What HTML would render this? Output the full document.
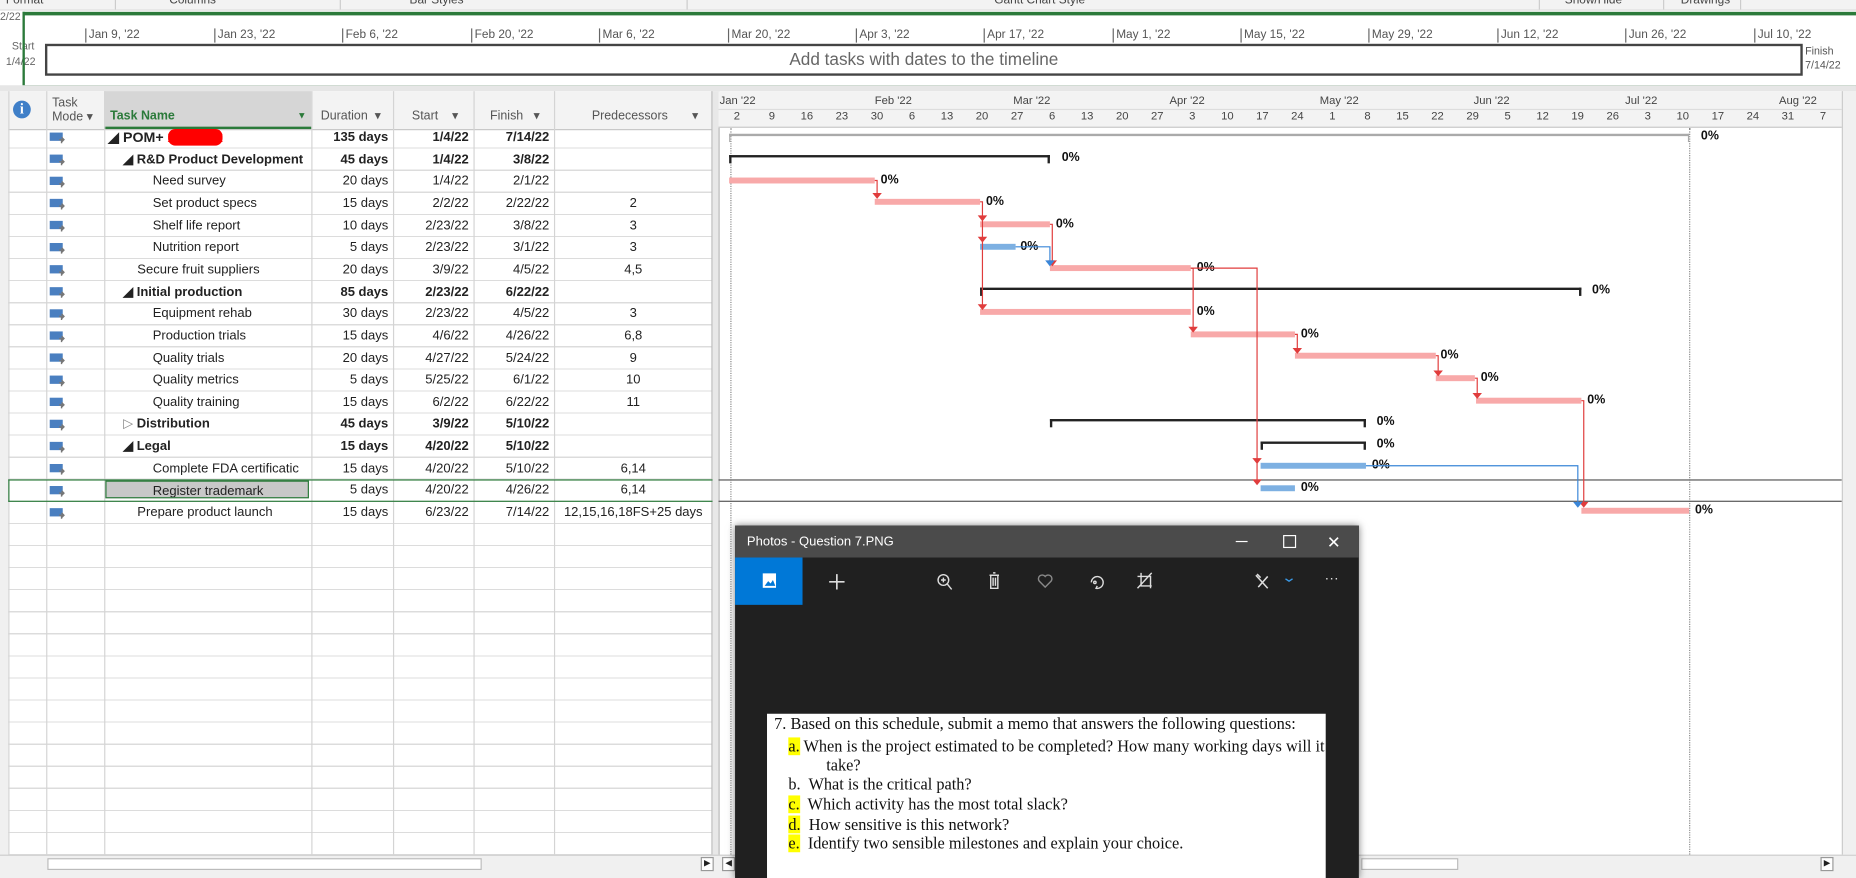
<!DOCTYPE html>
<html><head><meta charset="utf-8">
<style>
html,body{margin:0;padding:0;width:1856px;height:878px;overflow:hidden;background:#fff;}
#root{position:absolute;left:0;top:0;width:1568px;height:742px;transform:scale(1.18367);transform-origin:0 0;font-family:"Liberation Sans",sans-serif;font-size:11px;color:#222;overflow:hidden;background:#fff}
.a{position:absolute}
.rib{top:0;left:0;width:1568px;height:8px;background:#f3f3f3;border-bottom:1px solid #ddd;overflow:hidden}
.rib span{position:absolute;top:-5px;font-size:10px;color:#444}
.tl{font-size:10px;color:#555;top:24px}
.tk{position:absolute;top:24px;width:1px;height:12px;background:#666}
.row{position:absolute;left:0;width:602px;height:18.65px;line-height:19.5px;white-space:nowrap}
.row div{position:absolute;top:0;overflow:hidden}
.b{font-weight:bold}
.dur{left:263px;width:65px;text-align:right}
.st{left:332px;width:64px;text-align:right}
.fi{left:400px;width:64px;text-align:right}
.pr{left:468px;width:134px;text-align:center}
.nm{left:88px;width:175px}
.vl{position:absolute;top:77px;height:645px;width:1px;background:#d4d4d4}
.bar{position:absolute;height:5px;background:#f8a9a9}
.blue{background:#7db0e2}
.pct{position:absolute;font-weight:bold;font-size:10.5px;color:#111}
.sum{position:absolute;height:2px;background:#222}
.sum:before,.sum:after{content:"";position:absolute;top:0;width:2px;height:7px;background:#222}
.sum:before{left:0}.sum:after{right:0}
.hd{position:absolute;top:77px;height:32px;color:#555;font-size:10.5px}
.wk{position:absolute;top:93px;font-size:9.5px;color:#444;width:29px;text-align:center}
.mo{position:absolute;top:80px;font-size:9.5px;color:#444}
.q{position:absolute;left:18px;font-family:"Liberation Serif",serif;font-size:13.8px;color:#111;white-space:nowrap}
.hl{background:#ffff00}
</style></head><body><div id="root">
<div class="a rib">
<span style="left:5px">Format</span><span style="left:143px">Columns</span><span style="left:346px">Bar Styles</span><span style="left:840px">Gantt Chart Style</span><span style="left:1322px">Show/Hide</span><span style="left:1420px">Drawings</span>
<div class="a" style="left:97px;top:0;width:1px;height:8px;background:#ccc"></div>
<div class="a" style="left:287px;top:0;width:1px;height:8px;background:#ccc"></div>
<div class="a" style="left:580px;top:0;width:1px;height:8px;background:#ccc"></div>
<div class="a" style="left:1300px;top:0;width:1px;height:8px;background:#ccc"></div>
<div class="a" style="left:1405px;top:0;width:1px;height:8px;background:#ccc"></div>
<div class="a" style="left:1470px;top:0;width:1px;height:8px;background:#ccc"></div>
</div>
<div class="a" style="left:0;top:9px;width:20px;height:63px;background:#fff;font-size:9px;color:#666"><span class="a" style="left:0;top:0">2/22</span><span class="a" style="left:10px;top:25px">Start</span><span class="a" style="left:5px;top:38px">1/4/22</span></div>
<div class="a" style="left:19px;top:10px;width:1549px;height:59px;border-top:3px solid #2b7a3a;border-left:2px solid #2b7a3a;border-bottom:2px solid #2b7a3a"></div>
<div class="tk" style="left:72px"></div><span class="a tl" style="left:75px">Jan 9, '22</span>
<div class="tk" style="left:181px"></div><span class="a tl" style="left:184px">Jan 23, '22</span>
<div class="tk" style="left:289px"></div><span class="a tl" style="left:292px">Feb 6, '22</span>
<div class="tk" style="left:398px"></div><span class="a tl" style="left:401px">Feb 20, '22</span>
<div class="tk" style="left:506px"></div><span class="a tl" style="left:509px">Mar 6, '22</span>
<div class="tk" style="left:615px"></div><span class="a tl" style="left:618px">Mar 20, '22</span>
<div class="tk" style="left:723px"></div><span class="a tl" style="left:726px">Apr 3, '22</span>
<div class="tk" style="left:831px"></div><span class="a tl" style="left:834px">Apr 17, '22</span>
<div class="tk" style="left:940px"></div><span class="a tl" style="left:943px">May 1, '22</span>
<div class="tk" style="left:1048px"></div><span class="a tl" style="left:1051px">May 15, '22</span>
<div class="tk" style="left:1156px"></div><span class="a tl" style="left:1159px">May 29, '22</span>
<div class="tk" style="left:1265px"></div><span class="a tl" style="left:1268px">Jun 12, '22</span>
<div class="tk" style="left:1373px"></div><span class="a tl" style="left:1376px">Jun 26, '22</span>
<div class="tk" style="left:1482px"></div><span class="a tl" style="left:1485px">Jul 10, '22</span>
<div class="a" style="left:38px;top:37px;width:1481px;height:23px;border:2px solid #444;background:#fff;text-align:center;line-height:24px;font-size:14.5px;color:#666">Add tasks with dates to the timeline</div>
<div class="a" style="left:1525px;top:37px;font-size:9px;color:#555;line-height:12px">Finish<br>7/14/22</div>
<div class="a" style="left:0;top:72px;width:1568px;height:5px;background:#e6e6e6"></div>
<div class="a" style="left:0;top:77px;width:602px;height:32px;background:#f3f3f3;border-bottom:1px solid #c8c8c8"></div>
<div class="a" style="left:88px;top:77px;width:175px;height:30px;background:#d6d6d6;border-bottom:2px solid #2b7a3a"></div>
<div class="a" style="left:11px;top:85px;width:15px;height:15px;border-radius:50%;background:#3f7fc8;color:#fff;font-weight:bold;font-family:'Liberation Serif',serif;font-size:12px;text-align:center;line-height:15px">i</div>
<div class="hd" style="left:44px;top:81px;line-height:12px">Task<br>Mode ▾</div>
<div class="hd" style="left:93px;top:92px;color:#2b7a3a;font-weight:bold">Task Name</div><div class="hd" style="left:251px;top:93px;color:#2b7a3a;font-size:8px">▼</div>
<div class="hd" style="left:271px;top:92px">Duration &nbsp;▾</div>
<div class="hd" style="left:348px;top:92px">Start &nbsp;&nbsp;&nbsp;▾</div>
<div class="hd" style="left:414px;top:92px">Finish &nbsp;&nbsp;▾</div>
<div class="hd" style="left:500px;top:92px">Predecessors &nbsp;&nbsp;&nbsp;&nbsp;&nbsp;&nbsp;▾</div>
<div class="a" style="left:0;top:107px;width:602px;height:615px;background:repeating-linear-gradient(to bottom,transparent 0 17.65px,#dcdcdc 17.65px 18.65px)"></div>
<div class="a" style="left:0;top:77px;width:7px;height:645px;background:#f0f0f0"></div>
<div class="vl" style="left:7px"></div><div class="vl" style="left:39px"></div><div class="vl" style="left:88px"></div><div class="vl" style="left:263px"></div><div class="vl" style="left:332px"></div><div class="vl" style="left:400px"></div><div class="vl" style="left:468px"></div><div class="vl" style="left:601px;background:#bbb"></div>
<div class="a" style="left:602px;top:77px;width:5px;height:660px;background:#e8e8e8;border-right:1px solid #bbb"></div>
<div id="rows">
<div class="row" style="top:107px"><div class="nm b" style="font-size:12px">&nbsp;◢ POM+ <span style="background:#f00;color:#f00;border-radius:6px">xxxxxxx</span></div><div class="dur b">135 days</div><div class="st b">1/4/22</div><div class="fi b">7/14/22</div></div>
<div class="row" style="top:125.65px"><div class="nm b" style="padding-left:16px">◢ R&amp;D Product Development</div><div class="dur b">45 days</div><div class="st b">1/4/22</div><div class="fi b">3/8/22</div></div>
<div class="row" style="top:144.3px"><div class="nm" style="padding-left:41px">Need survey</div><div class="dur">20 days</div><div class="st">1/4/22</div><div class="fi">2/1/22</div></div>
<div class="row" style="top:162.95px"><div class="nm" style="padding-left:41px">Set product specs</div><div class="dur">15 days</div><div class="st">2/2/22</div><div class="fi">2/22/22</div><div class="pr">2</div></div>
<div class="row" style="top:181.6px"><div class="nm" style="padding-left:41px">Shelf life report</div><div class="dur">10 days</div><div class="st">2/23/22</div><div class="fi">3/8/22</div><div class="pr">3</div></div>
<div class="row" style="top:200.25px"><div class="nm" style="padding-left:41px">Nutrition report</div><div class="dur">5 days</div><div class="st">2/23/22</div><div class="fi">3/1/22</div><div class="pr">3</div></div>
<div class="row" style="top:218.9px"><div class="nm" style="padding-left:28px">Secure fruit suppliers</div><div class="dur">20 days</div><div class="st">3/9/22</div><div class="fi">4/5/22</div><div class="pr">4,5</div></div>
<div class="row" style="top:237.55px"><div class="nm b" style="padding-left:16px">◢ Initial production</div><div class="dur b">85 days</div><div class="st b">2/23/22</div><div class="fi b">6/22/22</div></div>
<div class="row" style="top:256.2px"><div class="nm" style="padding-left:41px">Equipment rehab</div><div class="dur">30 days</div><div class="st">2/23/22</div><div class="fi">4/5/22</div><div class="pr">3</div></div>
<div class="row" style="top:274.85px"><div class="nm" style="padding-left:41px">Production trials</div><div class="dur">15 days</div><div class="st">4/6/22</div><div class="fi">4/26/22</div><div class="pr">6,8</div></div>
<div class="row" style="top:293.5px"><div class="nm" style="padding-left:41px">Quality trials</div><div class="dur">20 days</div><div class="st">4/27/22</div><div class="fi">5/24/22</div><div class="pr">9</div></div>
<div class="row" style="top:312.15px"><div class="nm" style="padding-left:41px">Quality metrics</div><div class="dur">5 days</div><div class="st">5/25/22</div><div class="fi">6/1/22</div><div class="pr">10</div></div>
<div class="row" style="top:330.8px"><div class="nm" style="padding-left:41px">Quality training</div><div class="dur">15 days</div><div class="st">6/2/22</div><div class="fi">6/22/22</div><div class="pr">11</div></div>
<div class="row" style="top:349.45px"><div class="nm b" style="padding-left:16px"><span style="color:#888;font-weight:normal">▷</span> Distribution</div><div class="dur b">45 days</div><div class="st b">3/9/22</div><div class="fi b">5/10/22</div></div>
<div class="row" style="top:368.1px"><div class="nm b" style="padding-left:16px">◢ Legal</div><div class="dur b">15 days</div><div class="st b">4/20/22</div><div class="fi b">5/10/22</div></div>
<div class="row" style="top:386.75px"><div class="nm" style="padding-left:41px">Complete FDA certificatic</div><div class="dur">15 days</div><div class="st">4/20/22</div><div class="fi">5/10/22</div><div class="pr">6,14</div></div>
<div class="row" style="top:405.4px"><div class="a" style="left:7px;top:0;width:594px;height:17px;border:1px solid #2b7a3a;border-right:none"></div><div class="nm" style="left:89px;top:1px;width:172px;height:15px;line-height:16px;background:#c8c8c8;border:1px solid #2b7a3a;padding-left:39px;box-sizing:border-box">Register trademark</div><div class="dur">5 days</div><div class="st">4/20/22</div><div class="fi">4/26/22</div><div class="pr">6,14</div></div>
<div class="row" style="top:424.05px"><div class="nm" style="padding-left:28px">Prepare product launch</div><div class="dur">15 days</div><div class="st">6/23/22</div><div class="fi">7/14/22</div><div class="pr">12,15,16,18FS+25 days</div></div>
</div>
<svg class="a" style="left:0;top:0" width="60" height="450">
<defs><g id="mi"><rect x="42" y="0" width="11" height="7" fill="#4a7fc0"/><path d="M50 6h4M52 4l2 2-2 2M52 6v3" stroke="#777" stroke-width="1.2" fill="none"/></g></defs>
<use href="#mi" y="112"/><use href="#mi" y="130.6"/><use href="#mi" y="149.3"/><use href="#mi" y="168"/><use href="#mi" y="186.6"/><use href="#mi" y="205.3"/><use href="#mi" y="224"/><use href="#mi" y="242.6"/><use href="#mi" y="261.3"/><use href="#mi" y="280"/><use href="#mi" y="298.6"/><use href="#mi" y="317.3"/><use href="#mi" y="336"/><use href="#mi" y="354.6"/><use href="#mi" y="373.3"/><use href="#mi" y="392"/><use href="#mi" y="410.6"/><use href="#mi" y="429.3"/>
</svg>
<div class="a" style="left:607px;top:77px;width:961px;height:30px;background:#f3f3f3;border-bottom:1px solid #c8c8c8"></div>
<div class="a" style="left:607px;top:92px;width:961px;height:1px;background:#ddd"></div>
<div class="mo" style="left:608px">Jan '22</div><div class="mo" style="left:739px">Feb '22</div><div class="mo" style="left:856px">Mar '22</div><div class="mo" style="left:988px">Apr '22</div><div class="mo" style="left:1115px">May '22</div><div class="mo" style="left:1245px">Jun '22</div><div class="mo" style="left:1373px">Jul '22</div><div class="mo" style="left:1503px">Aug '22</div>
<div class="wk" style="left:608px">2</div><div class="wk" style="left:637.6px">9</div><div class="wk" style="left:667.2px">16</div><div class="wk" style="left:696.8px">23</div><div class="wk" style="left:726.4px">30</div><div class="wk" style="left:756px">6</div><div class="wk" style="left:785.6px">13</div><div class="wk" style="left:815.2px">20</div><div class="wk" style="left:844.8px">27</div><div class="wk" style="left:874.4px">6</div><div class="wk" style="left:904px">13</div><div class="wk" style="left:933.6px">20</div><div class="wk" style="left:963.2px">27</div><div class="wk" style="left:992.8px">3</div><div class="wk" style="left:1022.4px">10</div><div class="wk" style="left:1052px">17</div><div class="wk" style="left:1081.6px">24</div><div class="wk" style="left:1111.2px">1</div><div class="wk" style="left:1140.8px">8</div><div class="wk" style="left:1170.4px">15</div><div class="wk" style="left:1200px">22</div><div class="wk" style="left:1229.6px">29</div><div class="wk" style="left:1259.2px">5</div><div class="wk" style="left:1288.8px">12</div><div class="wk" style="left:1318.4px">19</div><div class="wk" style="left:1348px">26</div><div class="wk" style="left:1377.6px">3</div><div class="wk" style="left:1407.2px">10</div><div class="wk" style="left:1436.8px">17</div><div class="wk" style="left:1466.4px">24</div><div class="wk" style="left:1496px">31</div><div class="wk" style="left:1525.6px">7</div>
<div class="a" style="left:617px;top:108px;height:614px;border-left:1px dotted #888"></div>
<div class="a" style="left:1427px;top:108px;height:614px;border-left:1px dotted #888"></div>
<div class="a" style="left:607px;top:405px;width:961px;height:1px;background:#555"></div>
<div class="a" style="left:607px;top:423px;width:961px;height:1px;background:#555"></div>
<div class="a" style="left:616px;top:113px;width:811px;height:2px;background:#aaa"></div><div class="a" style="left:616px;top:113px;width:1px;height:7px;background:#aaa"></div><div class="a" style="left:1426px;top:113px;width:1px;height:7px;background:#aaa"></div><div class="pct" style="left:1437px;top:109px">0%</div>
<div class="sum" style="left:616px;top:131px;width:271px"></div><div class="pct" style="left:897px;top:127px">0%</div>
<div class="bar" style="left:616px;top:150px;width:123px"></div><div class="pct" style="left:744px;top:146px">0%</div>
<div class="bar" style="left:739px;top:168px;width:89px"></div><div class="pct" style="left:833px;top:164px">0%</div>
<div class="bar" style="left:828px;top:187px;width:59px"></div><div class="pct" style="left:892px;top:183px">0%</div>
<div class="bar blue" style="left:828px;top:206px;width:30px"></div><div class="pct" style="left:862px;top:202px">0%</div>
<div class="bar" style="left:887px;top:224px;width:119px"></div><div class="pct" style="left:1011px;top:220px">0%</div>
<div class="sum" style="left:828px;top:243px;width:508px"></div><div class="pct" style="left:1345px;top:239px">0%</div>
<div class="bar" style="left:828px;top:261px;width:178px"></div><div class="pct" style="left:1011px;top:257px">0%</div>
<div class="bar" style="left:1006px;top:280px;width:88px"></div><div class="pct" style="left:1099px;top:276px">0%</div>
<div class="bar" style="left:1094px;top:298px;width:119px"></div><div class="pct" style="left:1217px;top:294px">0%</div>
<div class="bar" style="left:1213px;top:317px;width:33px"></div><div class="pct" style="left:1251px;top:313px">0%</div>
<div class="bar" style="left:1247px;top:336px;width:89px"></div><div class="pct" style="left:1341px;top:332px">0%</div>
<div class="sum" style="left:887px;top:354px;width:267px"></div><div class="pct" style="left:1163px;top:350px">0%</div>
<div class="sum" style="left:1065px;top:373px;width:89px"></div><div class="pct" style="left:1163px;top:369px">0%</div>
<div class="bar blue" style="left:1065px;top:391px;width:89px"></div><div class="pct" style="left:1159px;top:387px">0%</div>
<div class="bar blue" style="left:1065px;top:410px;width:29px"></div><div class="pct" style="left:1099px;top:406px">0%</div>
<div class="bar" style="left:1336px;top:429px;width:91px"></div><div class="pct" style="left:1432px;top:425px">0%</div>
<svg class="a" style="left:0;top:0" width="1568" height="450" fill="none">
<g stroke="#e03c3c" stroke-width="1">
<path d="M739 152.5H741V164"/><path d="M828 170.5H830V258"/><path d="M887 189.5H889V221"/><path d="M1006 226.5H1008V277"/><path d="M1006 226.5H1062V407"/><path d="M1094 282.5H1096V295"/><path d="M1213 300.5H1215V314"/><path d="M1246 319.5H1248V333"/><path d="M1336 338.5H1338V426"/>
</g>
<g fill="#e03c3c"><path d="M737 163h8l-4 5z"/><path d="M826 182h8l-4 5z"/><path d="M826 200h8l-4 5z"/><path d="M826 257h8l-4 5z"/><path d="M885 220h8l-4 5z"/><path d="M1004 276h8l-4 5z"/><path d="M1092 294h8l-4 5z"/><path d="M1211 313h8l-4 5z"/><path d="M1244 332h8l-4 5z"/><path d="M1058 387h8l-4 5z"/><path d="M1058 405h8l-4 5z"/><path d="M1334 424h8l-4 5z"/></g>
<g stroke="#3a86d8"><path d="M858 208.5H887V221"/><path d="M1154 393.5H1333V426"/></g>
<g fill="#3a86d8"><path d="M883 220h8l-4 5z"/><path d="M1329 424h8l-4 5z"/></g>
</svg>
<div class="a" style="left:0;top:722px;width:1568px;height:20px;background:#f0f0f0;border-top:1px solid #ccc"></div>
<div class="a" style="left:40px;top:725px;width:365px;height:8px;background:#fff;border:1px solid #bbb"></div>
<div class="a" style="left:592px;top:724px;width:9px;height:10px;border:1px solid #999;background:#fff;font-size:7px;line-height:10px;text-align:center">▶</div>
<div class="a" style="left:610px;top:724px;width:9px;height:10px;border:1px solid #999;background:#fff;font-size:7px;line-height:10px;text-align:center">◀</div>
<div class="a" style="left:1150px;top:725px;width:80px;height:8px;background:#fff;border:1px solid #bbb"></div>
<div class="a" style="left:1538px;top:724px;width:9px;height:10px;border:1px solid #999;background:#fff;font-size:7px;line-height:10px;text-align:center">▶</div>
<div class="a" style="left:1556px;top:77px;width:12px;height:645px;background:#f0f0f0;border-left:1px solid #ccc"></div>
<div class="a" style="left:621px;top:444px;width:527px;height:298px;background:#202020;box-shadow:0 0 6px rgba(0,0,0,.5)">
<div class="a" style="left:0;top:0;width:527px;height:27px;background:#4b4b4b;color:#fff;font-size:11px;line-height:28px"><span style="padding-left:10px">Photos - Question 7.PNG</span>
<span class="a" style="left:423px;top:13px;width:10px;height:1px;background:#fff"></span>
<span class="a" style="left:463px;top:8px;width:9px;height:9px;border:1px solid #fff"></span>
<span class="a" style="left:500px;top:0;font-size:14px">✕</span></div>
<div class="a" style="left:0;top:27px;width:57px;height:40px;background:#0078d7"></div>
<svg class="a" style="left:0;top:27px" width="527" height="40" fill="none" stroke="#ddd" stroke-width="1.2">
<rect x="24" y="14" width="10" height="11" fill="#fff" stroke="#fff"/><path d="M25 24l3-4 2 2 2-3 2 5z" fill="#0078d7" stroke="none"/>
<path d="M86 14v13M79.5 20.5h13" stroke-width="1.4"/>
<circle cx="176" cy="19" r="4.5"/><path d="M179 22l4 5M174 19h4M176 17v4"/>
<path d="M215 15h8M218 13h2M216 15v11h6V15M218 17v7M220 17v7"/>
<path d="M262 25l-5-5a3 3 0 0 1 5-4 3 3 0 0 1 5 4z" stroke="#888"/>
<path d="M301 21a5 5 0 1 1 4 5l1-2"/><circle cx="304" cy="21" r="1"/>
<path d="M343 13v11h9M340 16h11v10M340 26l12-13"/>
<path d="M440 15l10 11M442 25l8-9M441 14l3 3" stroke-width="1.3"/>
<path d="M465 18l3 2 3-2" stroke="#3a9ae8"/>
</svg>
<div class="a" style="left:498px;top:37px;color:#ddd;font-size:12px">···</div>
<div class="a" style="left:27px;top:159px;width:472px;height:139px;background:#fff;overflow:hidden">
<div class="q" style="left:6px;top:1px">7. Based on this schedule, submit a memo that answers the following questions:</div>
<div class="q" style="top:20px"><span class="hl">a.</span> When is the project estimated to be completed? How many working days will it</div>
<div class="q" style="left:50px;top:36px">take?</div>
<div class="q" style="top:52px">b.&nbsp; What is the critical path?</div>
<div class="q" style="top:69px"><span class="hl">c.</span>&nbsp; Which activity has the most total slack?</div>
<div class="q" style="top:86px"><span class="hl">d.</span>&nbsp; How sensitive is this network?</div>
<div class="q" style="top:102px"><span class="hl">e.</span>&nbsp; Identify two sensible milestones and explain your choice.</div>
</div>
</div>
</div></body></html>
